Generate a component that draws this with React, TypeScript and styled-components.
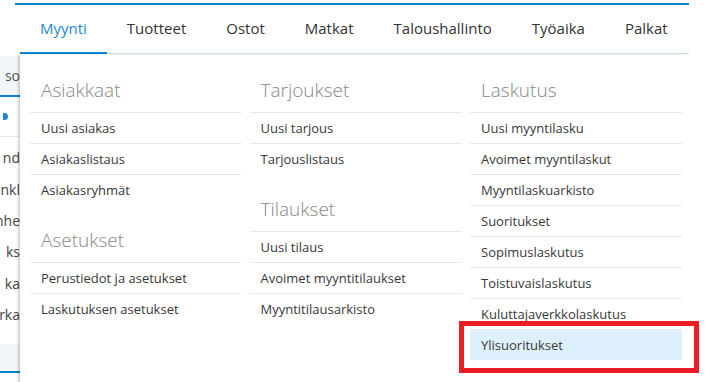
import React from "react";
import styled, { createGlobalStyle } from "styled-components";

const Global = createGlobalStyle`
  html, body { margin: 0; padding: 0; background: #ffffff; }
  body { font-family: "Open Sans", "Noto Sans", Arial, sans-serif; color: #333; overflow: hidden; }
  * { box-sizing: border-box; }
`;

const Page = styled.div`
  position: relative;
  width: 709px;
  height: 382px;
  overflow: hidden;
  background: #fff;
`;

const TopStrip = styled.div`
  height: 3px;
`;

const Header = styled.div`
  margin-left: 15px;
  width: 674px;
  border-top: 2px solid #0a84d0;
`;

const Nav = styled.nav`
  display: flex;
  margin-left: 5px;
  height: 49px;
  border-bottom: 1px solid #c8e1ef;
`;

const Tab = styled.div<{ $active?: boolean }>`
  display: flex;
  align-items: center;
  padding: 0 20px 2px;
  font-size: 15px;
  color: ${(p) => (p.$active ? "#1b87d3" : "#333")};
  border-bottom: ${(p) => (p.$active ? "2px solid #0a84d0" : "2px solid transparent")};
  margin-bottom: -1px;
  white-space: nowrap;
`;

const SideBg = styled.div`
  width: 20px;
  display: flex;
  flex-direction: column;
  margin-top: 2px;
  overflow: hidden;
`;

const SideHead = styled.div`
  height: 41px;
  background: #f3f6f9;
  border-bottom: 2px solid #0a84d0;
  display: flex;
  align-items: center;
  justify-content: flex-end;
  font-size: 14px;
  color: #555;
  white-space: nowrap;
`;

const SideMark = styled.div`
  height: 40px;
  display: flex;
  align-items: center;
  justify-content: flex-end;
  border-bottom: 1px solid #e6e6e6;
  margin-bottom: 5px;
  padding-right: 12px;
`;

const Dot = styled.span`
  width: 5px;
  height: 7px;
  border-radius: 0 4px 4px 0;
  background: #1b87d3;
`;

const SideRow = styled.div`
  height: 31.4px;
  display: flex;
  align-items: center;
  justify-content: flex-end;
  font-size: 14px;
  color: #444;
  white-space: nowrap;
`;

const SideFoot = styled.div`
  margin-top: 14px;
  height: 29px;
  background: #f3f6f9;
  border-bottom: 2px solid #0a84d0;
`;

const Dropdown = styled.div`
  position: absolute;
  left: 20px;
  top: 55px;
  width: 669px;
  height: 340px;
  background: #fff;
  box-shadow: -2px 0 2px rgba(0, 0, 0, 0.18);
  display: grid;
  grid-template-columns: 211px 212px 212px;
  column-gap: 8.5px;
  padding: 0 7px 0 10px;
  align-items: start;
`;

const Column = styled.div`
  display: flex;
  flex-direction: column;
`;

const Heading = styled.div`
  padding: 23px 11px 10px;
  font-size: 19px;
  line-height: 24px;
  font-weight: 300;
  color: #888;
  border-bottom: 1px solid #e8e8e8;
`;

const Item = styled.div<{ $last?: boolean; $active?: boolean }>`
  height: ${(p) => (p.$last ? "30px" : "31px")};
  padding: 0 11px;
  display: flex;
  align-items: center;
  font-size: 13px;
  color: #383838;
  white-space: nowrap;
  background: ${(p) => (p.$active ? "#def0fc" : "transparent")};
  border-bottom: ${(p) => (p.$last ? "none" : "1px solid #e8e8e8")};
`;

const Callout = styled.div`
  position: absolute;
  left: 459px;
  top: 321px;
  width: 240px;
  height: 52px;
  border: 5px solid #ed1c24;
  pointer-events: none;
`;

const Body = styled.div`
  display: flex;
`;

type Group = { title: string; items: string[] };

const columns: Group[][] = [
  [
    { title: "Asiakkaat", items: ["Uusi asiakas", "Asiakaslistaus", "Asiakasryhmät"] },
    { title: "Asetukset", items: ["Perustiedot ja asetukset", "Laskutuksen asetukset"] },
  ],
  [
    { title: "Tarjoukset", items: ["Uusi tarjous", "Tarjouslistaus"] },
    { title: "Tilaukset", items: ["Uusi tilaus", "Avoimet myyntitilaukset", "Myyntitilausarkisto"] },
  ],
  [
    {
      title: "Laskutus",
      items: [
        "Uusi myyntilasku",
        "Avoimet myyntilaskut",
        "Myyntilaskuarkisto",
        "Suoritukset",
        "Sopimuslaskutus",
        "Toistuvaislaskutus",
        "Kuluttajaverkkolaskutus",
        "Ylisuoritukset",
      ],
    },
  ],
];

const tabs = ["Myynti", "Tuotteet", "Ostot", "Matkat", "Taloushallinto", "Työaika", "Palkat"];

const sideRows = ["nd", "nkl", "nhe", "ks", "ka", "rka"];

export default function App() {
  return (
    <Page>
      <Global />
      <TopStrip />
      <Header>
        <Nav>
          {tabs.map((t, i) => (
            <Tab key={t} $active={i === 0}>
              {t}
            </Tab>
          ))}
        </Nav>
      </Header>
      <Body>
        <SideBg>
          <SideHead>so</SideHead>
          <SideMark>
            <Dot />
          </SideMark>
          {sideRows.map((r) => (
            <SideRow key={r}>{r}</SideRow>
          ))}
          <SideFoot />
        </SideBg>
      </Body>
      <Dropdown>
        {columns.map((groups, ci) => (
          <Column key={ci}>
            {groups.map((g) => (
              <React.Fragment key={g.title}>
                <Heading>{g.title}</Heading>
                {g.items.map((it, ii) => (
                  <Item
                    key={it}
                    $last={ii === g.items.length - 1}
                    $active={it === "Ylisuoritukset"}
                  >
                    {it}
                  </Item>
                ))}
              </React.Fragment>
            ))}
          </Column>
        ))}
      </Dropdown>
      <Callout />
    </Page>
  );
}
